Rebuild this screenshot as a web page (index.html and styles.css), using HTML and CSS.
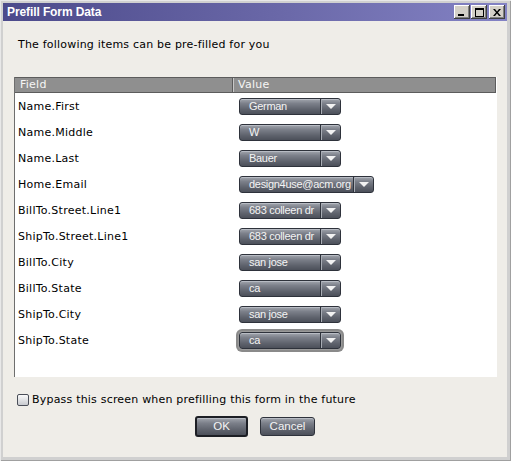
FILE: index.html
```html
<!DOCTYPE html>
<html>
<head>
<meta charset="utf-8">
<link rel="stylesheet" href="styles.css">
</head>
<body>
<div class="window">
  <div class="titlebar">
    <span class="title">Prefill Form Data</span>
    <div class="tbtns">
      <span class="tbtn"><svg width="8" height="7" viewBox="0 0 8 7"><rect x="0" y="5" width="6" height="2" fill="#000"/></svg></span>
      <span class="tbtn"><svg width="9" height="9" viewBox="0 0 9 9"><rect x="0.5" y="0.5" width="8" height="8" fill="none" stroke="#000"/><rect x="0" y="0" width="9" height="2" fill="#000"/></svg></span>
      <span class="tbtn close"><svg width="8" height="7" viewBox="0 0 8 7"><path d="M0 0h2l2 2.5 2-2.5h2l-3 3.5 3 3.5h-2l-2-2.5-2 2.5h-2l3-3.5z" fill="#000"/></svg></span>
    </div>
  </div>
  <div class="content">
    <p class="intro">The following items can be pre-filled for you</p>
    <div class="panel">
      <div class="thead">
        <div class="th th-field">Field</div>
        <div class="th">Value</div>
      </div>
      <div class="row"><div class="label">Name.First</div><div class="cell"><div class="combo"><span class="val">German</span><span class="arrow"></span></div></div></div>
      <div class="row"><div class="label">Name.Middle</div><div class="cell"><div class="combo"><span class="val">W</span><span class="arrow"></span></div></div></div>
      <div class="row"><div class="label">Name.Last</div><div class="cell"><div class="combo"><span class="val">Bauer</span><span class="arrow"></span></div></div></div>
      <div class="row"><div class="label">Home.Email</div><div class="cell"><div class="combo wide"><span class="val">design4use@acm.org</span><span class="arrow"></span></div></div></div>
      <div class="row"><div class="label">BillTo.Street.Line1</div><div class="cell"><div class="combo"><span class="val">683 colleen dr</span><span class="arrow"></span></div></div></div>
      <div class="row"><div class="label">ShipTo.Street.Line1</div><div class="cell"><div class="combo"><span class="val">683 colleen dr</span><span class="arrow"></span></div></div></div>
      <div class="row"><div class="label">BillTo.City</div><div class="cell"><div class="combo"><span class="val">san jose</span><span class="arrow"></span></div></div></div>
      <div class="row"><div class="label">BillTo.State</div><div class="cell"><div class="combo"><span class="val">ca</span><span class="arrow"></span></div></div></div>
      <div class="row"><div class="label">ShipTo.City</div><div class="cell"><div class="combo"><span class="val">san jose</span><span class="arrow"></span></div></div></div>
      <div class="row"><div class="label">ShipTo.State</div><div class="cell"><div class="combo focused"><span class="val">ca</span><span class="arrow"></span></div></div></div>
    </div>
    <label class="check"><span class="box"></span><span>Bypass this screen when prefilling this form in the future</span></label>
    <div class="buttons">
      <span class="btn default">OK</span>
      <span class="btn">Cancel</span>
    </div>
  </div>
</div>
</body>
</html>
```
FILE: styles.css
```css
* { box-sizing: border-box; }
html, body { margin: 0; padding: 0; }
body {
  width: 511px;
  height: 461px;
  overflow: hidden;
  background: #d4d0c8;
  font-family: "DejaVu Sans", Verdana, sans-serif;
  font-size: 11px;
  color: #000;
}
.window {
  width: 511px;
  height: 461px;
  padding: 3px 4px 4px 3px;
  background: #d0d0d0;
  box-shadow: inset 1px 1px 0 #e8e8e8, inset -1px -1px 0 #a0a0a0;
  display: flex;
  flex-direction: column;
}
.titlebar {
  height: 18px;
  flex: none;
  display: flex;
  align-items: center;
  justify-content: space-between;
  padding: 0 2px 0 4px;
  background: linear-gradient(to right, #4c4a8b, #6a68a8 55%, #8382c4);
}
.title {
  color: #fff;
  font-family: "Liberation Sans", Arial, sans-serif;
  font-weight: bold;
  font-size: 12px;
  letter-spacing: -0.1px;
}
.tbtns { display: flex; gap: 1px; }
.tbtn {
  width: 16px;
  height: 14px;
  background: #d4d0c8;
  box-shadow: inset -1px -1px 0 #404040, inset 1px 1px 0 #fff, inset -2px -2px 0 #808080;
  display: flex;
  align-items: center;
  justify-content: center;
}
.tbtns .close { margin-left: 1px; }
.content {
  flex: 1;
  background: #efede8;
  display: flex;
  flex-direction: column;
}
.intro {
  margin: 17px 0 0 15px;
  line-height: 14px;
  letter-spacing: 0.2px;
}
.panel {
  margin: 25px 0 0 11px;
  width: 483px;
  height: 300px;
  background: #fff;
  border-left: 1px solid #6e6e6e;
}
.thead {
  display: grid;
  grid-template-columns: 218px 1fr;
  height: 16px;
  margin-right: 1px;
  background: #8f8f8f;
  border-top: 1px solid #5c5c5c;
  border-bottom: 1px solid #5c5c5c;
  border-right: 1px solid #5c5c5c;
}
.th {
  color: #f6f6f6;
  line-height: 14px;
  padding-left: 5px;
  letter-spacing: 0.25px;
}
.th-field {
  border-right: 1px solid #5c5c5c;
  box-shadow: 1px 0 0 #c8c8c8;
}
.row {
  display: grid;
  grid-template-columns: 218px 1fr;
  height: 26px;
  align-items: center;
}
.label {
  padding-left: 3px;
  letter-spacing: 0.25px;
}
.cell {
  padding-left: 6px;
  display: flex;
}
.combo {
  position: relative;
  width: 102px;
  height: 17px;
  display: flex;
  border: 1px solid #2e323b;
  border-radius: 3px;
  background: linear-gradient(to bottom, #a2a6ae 0%, #7c808a 30%, #5e626c 70%, #4c505a 100%);
  box-shadow: inset 0 1px 0 #b8bcc4;
}
.combo.wide { width: 135px; }
.combo.focused {
  box-shadow: inset 0 1px 0 #b8bcc4, 0 0 0 1px #9a9a9a, 0 0 0 3px #8a8a8a;
  border-radius: 3px;
}
.val {
  flex: 1;
  min-width: 0;
  overflow: hidden;
  white-space: nowrap;
  padding-left: 9px;
  font-family: "Liberation Sans", Arial, sans-serif;
  font-size: 11px;
  letter-spacing: -0.3px;
  line-height: 15px;
  color: #f4f4f4;
  border-right: 1px solid #2e323b;
}
.arrow {
  flex: none;
  width: 19px;
  border-left: 1px solid #a8acb4;
  position: relative;
}
.arrow::after {
  content: "";
  position: absolute;
  left: 4px;
  top: 5px;
  border-left: 5px solid transparent;
  border-right: 5px solid transparent;
  border-top: 5px solid #f2f2f2;
}
.check {
  display: flex;
  align-items: center;
  margin: 16px 0 0 14px;
  line-height: 14px;
  letter-spacing: 0.2px;
}
.box {
  width: 12px;
  height: 12px;
  margin-right: 3px;
  border: 1px solid #4a4e58;
  border-radius: 2px;
  background: linear-gradient(to bottom, #fafafa, #c8cacf);
}
.buttons {
  display: flex;
  justify-content: center;
  align-items: center;
  gap: 12px;
  margin-top: 9px;
}
.btn {
  height: 19px;
  width: 55px;
  border: 1px solid #2e323b;
  border-radius: 3px;
  background: linear-gradient(to bottom, #a2a6ae 0%, #7c808a 30%, #5e626c 70%, #4c505a 100%);
  box-shadow: inset 0 1px 0 #b8bcc4;
  color: #f4f4f4;
  font-family: "Liberation Sans", Arial, sans-serif;
  font-size: 11.5px;
  line-height: 17px;
  text-align: center;
}
.btn.default {
  width: 53px;
  height: 21px;
  border: 2px solid #1c1e24;
  line-height: 17px;
}
```
